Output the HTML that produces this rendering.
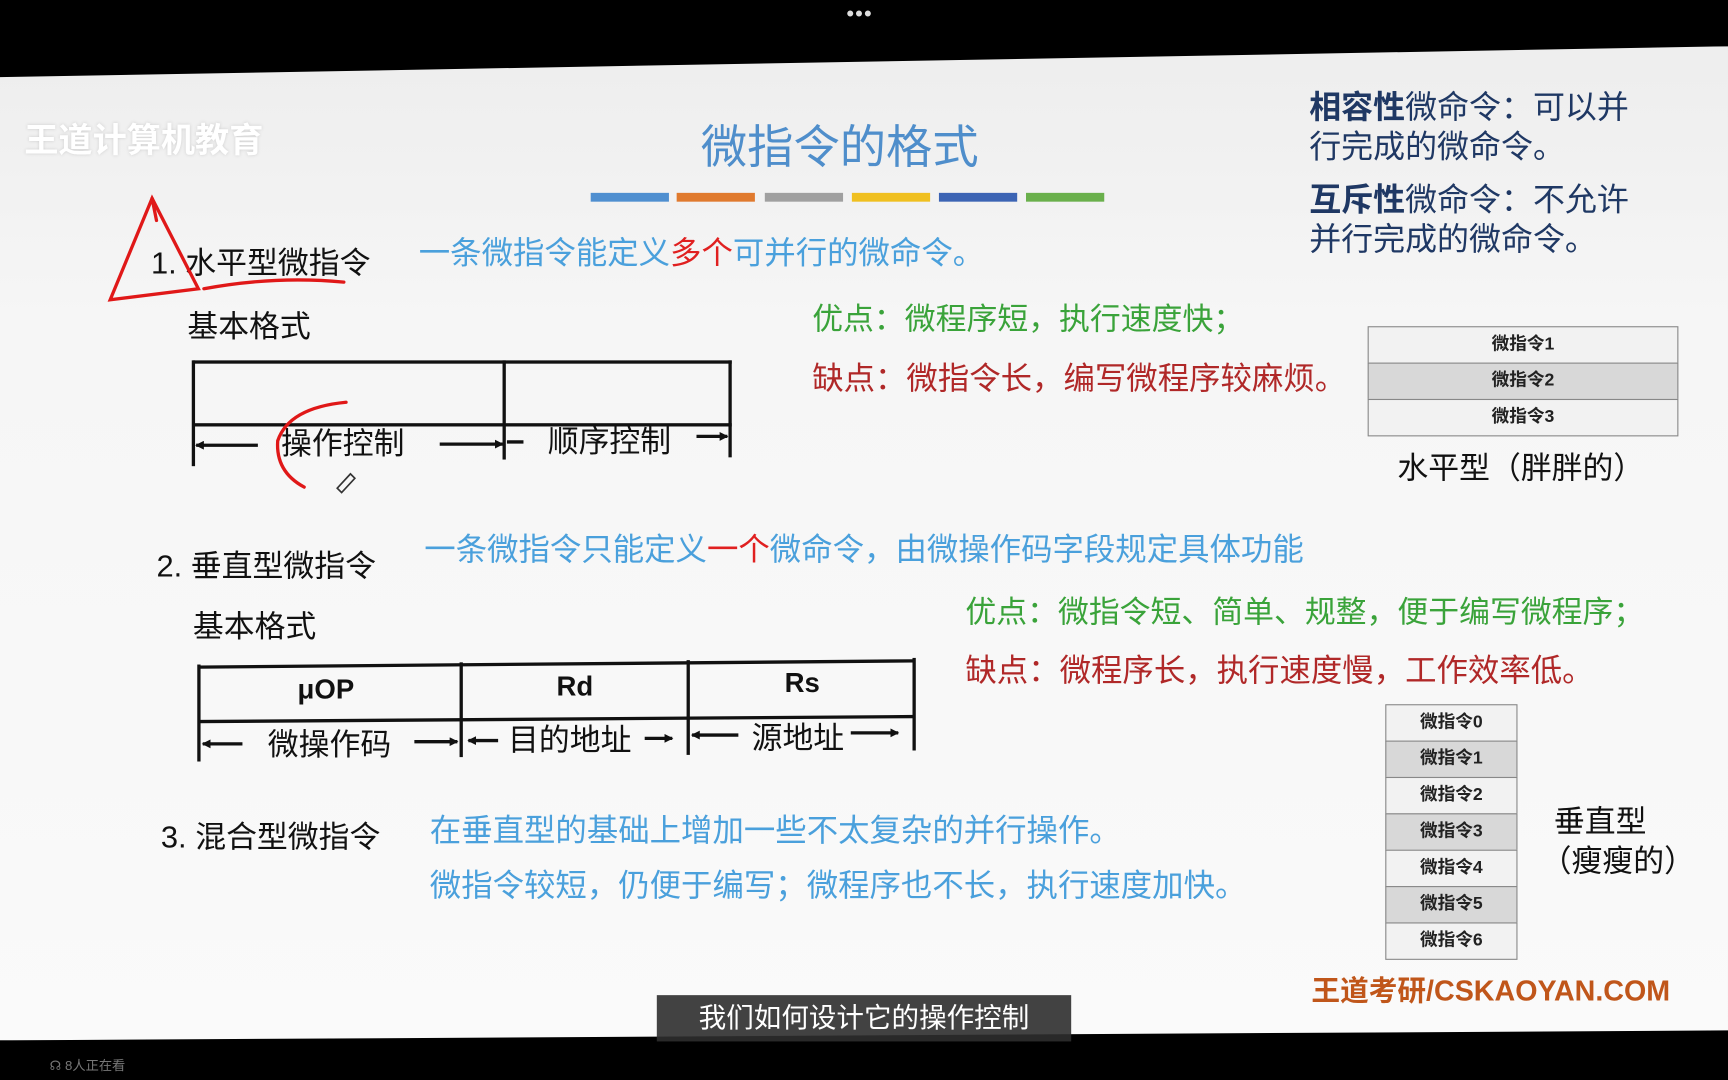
<!DOCTYPE html>
<html><head><meta charset="utf-8"><style>
html,body{margin:0;padding:0;background:#000;width:1728px;height:1080px;overflow:hidden}
#w{position:absolute;left:0;top:0;width:1568px;height:980px;transform:scale(1.10204);transform-origin:0 0;font-family:"Liberation Sans","Noto Sans CJK SC",sans-serif}
#slide{position:absolute;left:0;top:0;width:1568px;height:980px;background:linear-gradient(180deg,#ececec 0%,#f6f6f6 30%,#fafafa 100%);clip-path:polygon(0 70px,1568px 42px,1568px 935px,11px 944px,0 944px)}
.t{position:absolute;white-space:nowrap}
.blk{color:#111;font-size:28px}
.blue{color:#4aa0dc;font-size:28.5px}
.red{color:#e02020}
.grn{color:#3aa33a;font-size:28px}
.drd{color:#b02828;font-size:28.5px}
.nv{color:#1f3864;font-size:29px;line-height:36px}
.bar{position:absolute;top:175px;height:8px;width:71px}
.ln{position:absolute;background:#111}
.cell{position:absolute;border:1.5px solid #888;box-sizing:border-box;font-size:16px;font-weight:bold;color:#222;text-align:center}
</style></head><body><div id="w">
<div class="t" style="left:768px;top:2px;color:#ddd;font-size:20px;letter-spacing:1px">•••</div>
<div id="slide">
<div class="t" style="left:22px;top:102px;color:#fff;font-size:31px;font-weight:bold;text-shadow:0 0 3px #ccc">王道计算机教育</div>
<div class="t" style="left:636px;top:100px;color:#4f8ecb;font-size:42px">微指令的格式</div>
<div class="bar" style="left:536px;background:#4f8fd0"></div>
<div class="bar" style="left:614px;background:#e07a2e"></div>
<div class="bar" style="left:694px;background:#a0a0a0"></div>
<div class="bar" style="left:773px;background:#f0c020"></div>
<div class="bar" style="left:852px;background:#3c64b4"></div>
<div class="bar" style="left:931px;background:#6ab04c"></div>
<div class="t nv" style="left:1188px;top:80px"><b>相容性</b>微命令：可以并<br>行完成的微命令。</div>
<div class="t nv" style="left:1188px;top:164px"><b>互斥性</b>微命令：不允许<br>并行完成的微命令。</div>

<div class="t blk" style="left:137px;top:217px">1. 水平型微指令</div>
<div class="t blue" style="left:380px;top:207px">一条微指令能定义<span class="red">多个</span>可并行的微命令。</div>
<div class="t blk" style="left:170px;top:275px">基本格式</div>
<div class="ln" style="left:175px;top:327px;width:489px;height:3px"></div>
<div class="ln" style="left:175px;top:384px;width:489px;height:3px"></div>
<div class="ln" style="left:174px;top:327px;width:3px;height:96px"></div>
<div class="ln" style="left:456px;top:327px;width:3px;height:90px"></div>
<div class="ln" style="left:661px;top:327px;width:3px;height:88px"></div>
<div class="t blk" style="left:255px;top:381px">操作控制</div>
<div class="t blk" style="left:497px;top:379px">顺序控制</div>
<div class="t grn" style="left:737px;top:268px">优点：微程序短，执行速度快；</div>
<div class="t drd" style="left:737px;top:321px">缺点：微指令长，编写微程序较麻烦。</div>
<div class="cell" style="left:1241px;top:296px;width:282px;height:34px;line-height:32px;background:#f2f2f2">微指令1</div>
<div class="cell" style="left:1241px;top:329px;width:282px;height:34px;line-height:32px;background:#d8d8d8">微指令2</div>
<div class="cell" style="left:1241px;top:362px;width:282px;height:34px;line-height:32px;background:#f2f2f2">微指令3</div>
<div class="t blk" style="left:1268px;top:403px">水平型（胖胖的）</div>

<div class="t blk" style="left:142px;top:492px">2. 垂直型微指令</div>
<div class="t blue" style="left:385px;top:476px">一条微指令只能定义<span class="red">一个</span>微命令，由微操作码字段规定具体功能</div>
<div class="t blk" style="left:175px;top:547px">基本格式</div>
<div class="ln" style="left:180px;top:601px;width:650px;height:3px;transform:rotate(-0.5deg)"></div>
<div class="ln" style="left:180px;top:651px;width:650px;height:3px;transform:rotate(-0.4deg)"></div>
<div class="ln" style="left:179px;top:603px;width:3px;height:88px"></div>
<div class="ln" style="left:417px;top:601px;width:3px;height:86px"></div>
<div class="ln" style="left:623px;top:599px;width:3px;height:86px"></div>
<div class="ln" style="left:828px;top:597px;width:3px;height:84px"></div>
<div class="t blk" style="left:270px;top:612px;font-size:25px;font-weight:bold">μOP</div>
<div class="t blk" style="left:505px;top:609px;font-size:25px;font-weight:bold">Rd</div>
<div class="t blk" style="left:712px;top:606px;font-size:25px;font-weight:bold">Rs</div>
<div class="t blk" style="left:243px;top:654px">微操作码</div>
<div class="t blk" style="left:461px;top:650px">目的地址</div>
<div class="t blk" style="left:682px;top:648px">源地址</div>
<div class="t grn" style="left:876px;top:534px">优点：微指令短、简单、规整，便于编写微程序；</div>
<div class="t drd" style="left:876px;top:586px">缺点：微程序长，执行速度慢，工作效率低。</div>
<div class="cell" style="left:1257px;top:639px;width:120px;height:34px;line-height:31px;background:#f2f2f2">微指令0</div>
<div class="cell" style="left:1257px;top:672px;width:120px;height:34px;line-height:31px;background:#d8d8d8">微指令1</div>
<div class="cell" style="left:1257px;top:705px;width:120px;height:34px;line-height:31px;background:#f2f2f2">微指令2</div>
<div class="cell" style="left:1257px;top:738px;width:120px;height:34px;line-height:31px;background:#d8d8d8">微指令3</div>
<div class="cell" style="left:1257px;top:771px;width:120px;height:34px;line-height:31px;background:#f2f2f2">微指令4</div>
<div class="cell" style="left:1257px;top:804px;width:120px;height:34px;line-height:31px;background:#d8d8d8">微指令5</div>
<div class="cell" style="left:1257px;top:837px;width:120px;height:34px;line-height:31px;background:#f2f2f2">微指令6</div>
<div class="t blk" style="left:1410px;top:724px">垂直型</div>
<div class="t blk" style="left:1398px;top:760px">（瘦瘦的）</div>

<div class="t blk" style="left:146px;top:738px">3. 混合型微指令</div>
<div class="t blue" style="left:390px;top:731px">在垂直型的基础上增加一些不太复杂的并行操作。</div>
<div class="t blue" style="left:390px;top:781px">微指令较短，仍便于编写；微程序也不长，执行速度加快。</div>
<div class="t" style="left:1190px;top:879px;color:#c0561a;font-size:26px;font-weight:bold">王道考研/CSKAOYAN.COM</div>

<svg style="position:absolute;left:0;top:0" width="1568" height="980">
<defs><marker id="a" markerWidth="8" markerHeight="8" refX="7" refY="4" orient="auto" markerUnits="userSpaceOnUse"><path d="M0 0 L8 4 L0 8 Z" fill="#111"/></marker></defs>
<g stroke="#111" stroke-width="3" fill="none" marker-end="url(#a)">
<path d="M234 404 L178 404"/>
<path d="M399 403 L456 403"/>
<path d="M632 396 L660 396"/>
<path d="M220 675 L184 675"/>
<path d="M376 673 L415 673"/>
<path d="M452 672 L425 672"/>
<path d="M585 670 L610 670"/>
<path d="M670 667 L628 667"/>
<path d="M772 665 L815 665"/>
</g>
<path d="M460 401 L475 401" stroke="#111" stroke-width="3"/>
<g fill="none" stroke="#e01818" stroke-width="3" stroke-linecap="round">
<path d="M138 180 L100 272 L180 262 Z"/>
<path d="M138 180 L142 200"/>
<path d="M185 262 Q250 250 312 256"/>
<path d="M314 365 Q262 370 252 400 Q250 428 276 442"/>
</g>
<path d="M306 443 L318 430 L322 434 L310 447 Z" fill="none" stroke="#333" stroke-width="1.5"/>
</svg>
</div>
<div class="t" style="left:596px;top:903px;width:376px;height:42px;background:rgba(45,45,45,0.9);color:#fff;font-size:25px;line-height:42px;text-align:center">我们如何设计它的操作控制</div>
<div class="t" style="left:45px;top:958px;color:#777;font-size:12px">☊ 8人正在看</div>
</div></body></html>
